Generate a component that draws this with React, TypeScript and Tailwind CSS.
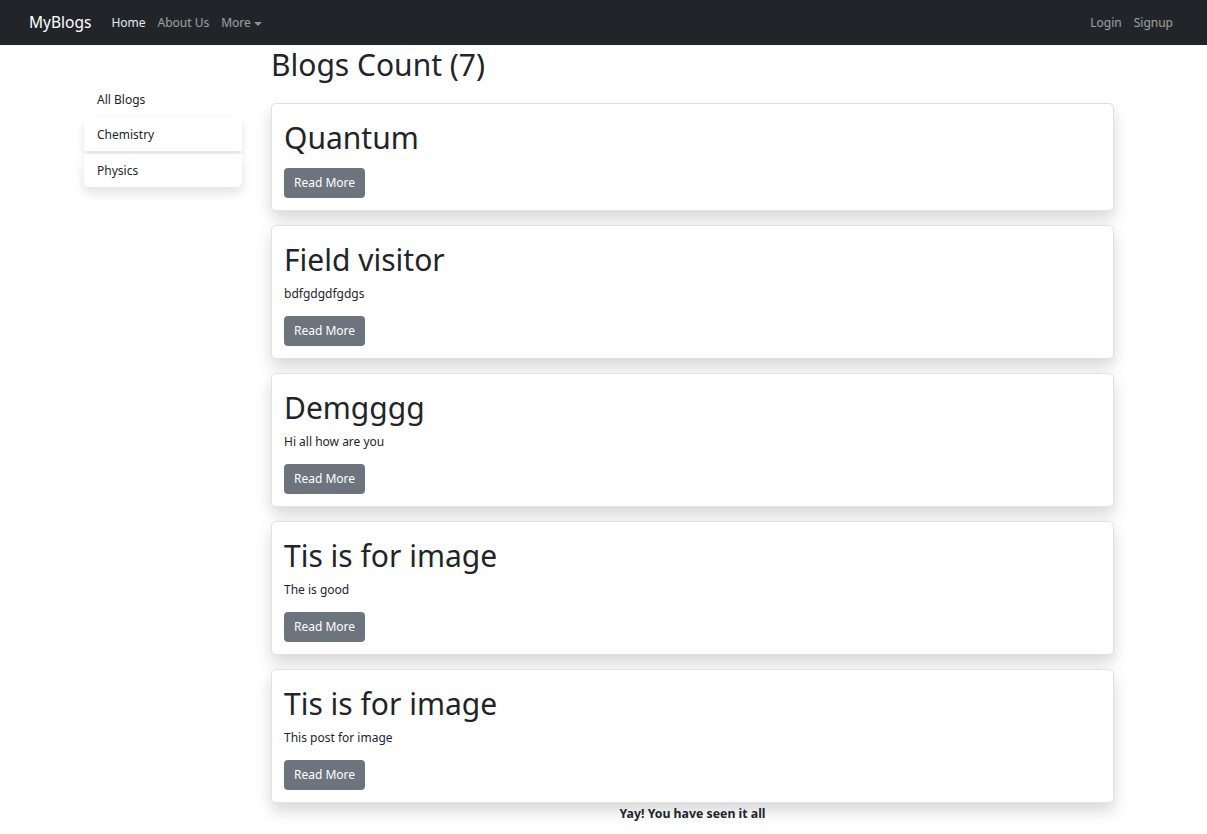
import React from "react"

const FONT = "font-['Noto_Sans',_'Liberation_Sans',_sans-serif]"

const POSTS = [
  { title: "Quantum", text: "" },
  { title: "Field visitor", text: "bdfgdgdfgdgs" },
  { title: "Demgggg", text: "Hi all how are you" },
  { title: "Tis is for image", text: "The is good" },
  { title: "Tis is for image", text: "This post for image" },
]

function Navbar() {
  return (
    <nav className="flex h-[45px] items-center justify-between bg-[#212529] pl-[29px] pr-[28px] pt-[1px]">
      <div className="flex items-center">
        <a className="mr-[14px] text-[15.5px] text-white">MyBlogs</a>
        <a className="px-[6px] text-[12px] text-white/90">Home</a>
        <a className="px-[6px] text-[12px] text-white/55">About Us</a>
        <a className="flex items-center px-[6px] text-[12px] text-white/55">
          More
          <span className="ml-[3px] mt-[1px] border-x-[4px] border-t-[4px] border-x-transparent border-t-[#8f9193]" />
        </a>
      </div>
      <div className="flex items-center">
        <a className="px-[6px] text-[12px] text-white/55">Login</a>
        <a className="px-[6px] text-[12px] text-white/55">Signup</a>
      </div>
    </nav>
  )
}

function Sidebar() {
  return (
    <aside className="mt-[38px] w-[158px] shrink-0 text-[12px] text-[#212529]">
      <div className="flex h-[34px] items-center px-[13px]">All Blogs</div>
      <div className="mt-px flex h-[33px] items-center rounded-t-[5px] bg-white px-[13px] shadow-[0_4px_8px_rgba(0,0,0,0.12)]">
        Chemistry
      </div>
      <div className="mt-[3px] flex h-[33px] items-center rounded-b-[5px] bg-white px-[13px] shadow-[0_6px_12px_rgba(0,0,0,0.12)]">
        Physics
      </div>
    </aside>
  )
}

function PostCard({ title, text }: { title: string; text: string }) {
  return (
    <div className="rounded-[5px] border border-[#dfe1e3] bg-white px-[12px] pt-[14px] pb-[12px] shadow-[0_8px_16px_rgba(0,0,0,0.16)]">
      <h2 className={`text-[30px] leading-[39px] text-[#212529] ${text ? "mb-[5px]" : "mb-[11px]"}`}>{title}</h2>
      {text && <p className="mb-[13px] text-[12px] leading-[19px] text-[#212529]">{text}</p>}
      <button className="h-[30px] rounded-[4px] bg-[#6c757d] px-[10px] text-[12px] text-white">Read More</button>
    </div>
  )
}

export default function App() {
  return (
    <div className={`min-h-[834px] bg-white ${FONT}`}>
      <Navbar />
      <div className="flex gap-[29px] pl-[84px]">
        <Sidebar />
        <main className="w-[843px]">
          <h1 className="mb-[18px] text-[30px] leading-[40px] text-[#212529]">Blogs Count (7)</h1>
          <div className="flex flex-col gap-[14px]">
            {POSTS.map((p, i) => (
              <PostCard key={i} title={p.title} text={p.text} />
            ))}
          </div>
          <p className="mt-[2px] text-center text-[12.3px] font-bold text-[#212529]">Yay! You have seen it all</p>
        </main>
      </div>
    </div>
  )
}
